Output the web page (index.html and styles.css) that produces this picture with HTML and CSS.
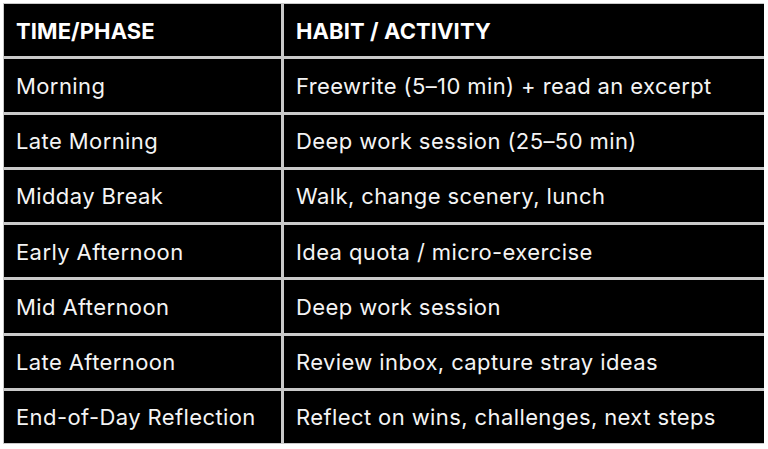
FILE: index.html
```html
<!DOCTYPE html>
<html>
<head>
<meta charset="utf-8">
<link rel="stylesheet" href="styles.css">
</head>
<body>
<div class="table">
  <div class="cell head">TIME/PHASE</div>
  <div class="cell head">HABIT / ACTIVITY</div>
  <div class="cell">Morning</div>
  <div class="cell">Freewrite (5–10 min) + read an excerpt</div>
  <div class="cell">Late Morning</div>
  <div class="cell">Deep work session (25–50 min)</div>
  <div class="cell">Midday Break</div>
  <div class="cell">Walk, change scenery, lunch</div>
  <div class="cell">Early Afternoon</div>
  <div class="cell">Idea quota / micro-exercise</div>
  <div class="cell">Mid Afternoon</div>
  <div class="cell">Deep work session</div>
  <div class="cell">Late Afternoon</div>
  <div class="cell">Review inbox, capture stray ideas</div>
  <div class="cell">End-of-Day Reflection</div>
  <div class="cell">Reflect on wins, challenges, next steps</div>
</div>
</body>
</html>
```

FILE: styles.css
```css
html, body {
  margin: 0;
  padding: 0;
  background: #ffffff;
}
body {
  width: 768px;
  height: 449px;
  overflow: hidden;
}
.table {
  margin: 3px 0 0 3px;
  width: 761px;
  height: 441px;
  box-sizing: border-box;
  padding: 1px;
  background: #c9c9c9;
  display: grid;
  grid-template-columns: 277px 480px;
  grid-template-rows: repeat(8, 1fr);
  column-gap: 3px;
  row-gap: 3px;
}
.cell {
  background: #000000;
  color: #f4f4f4;
  font-family: "Inter", "Open Sans", sans-serif;
  font-size: 22px;
  letter-spacing: 0.4px;
  display: flex;
  align-items: center;
  padding-left: 12px;
  padding-top: 1px;
  white-space: nowrap;
}
.head {
  font-weight: 700;
  letter-spacing: 0.1px;
  color: #ffffff;
}
```
